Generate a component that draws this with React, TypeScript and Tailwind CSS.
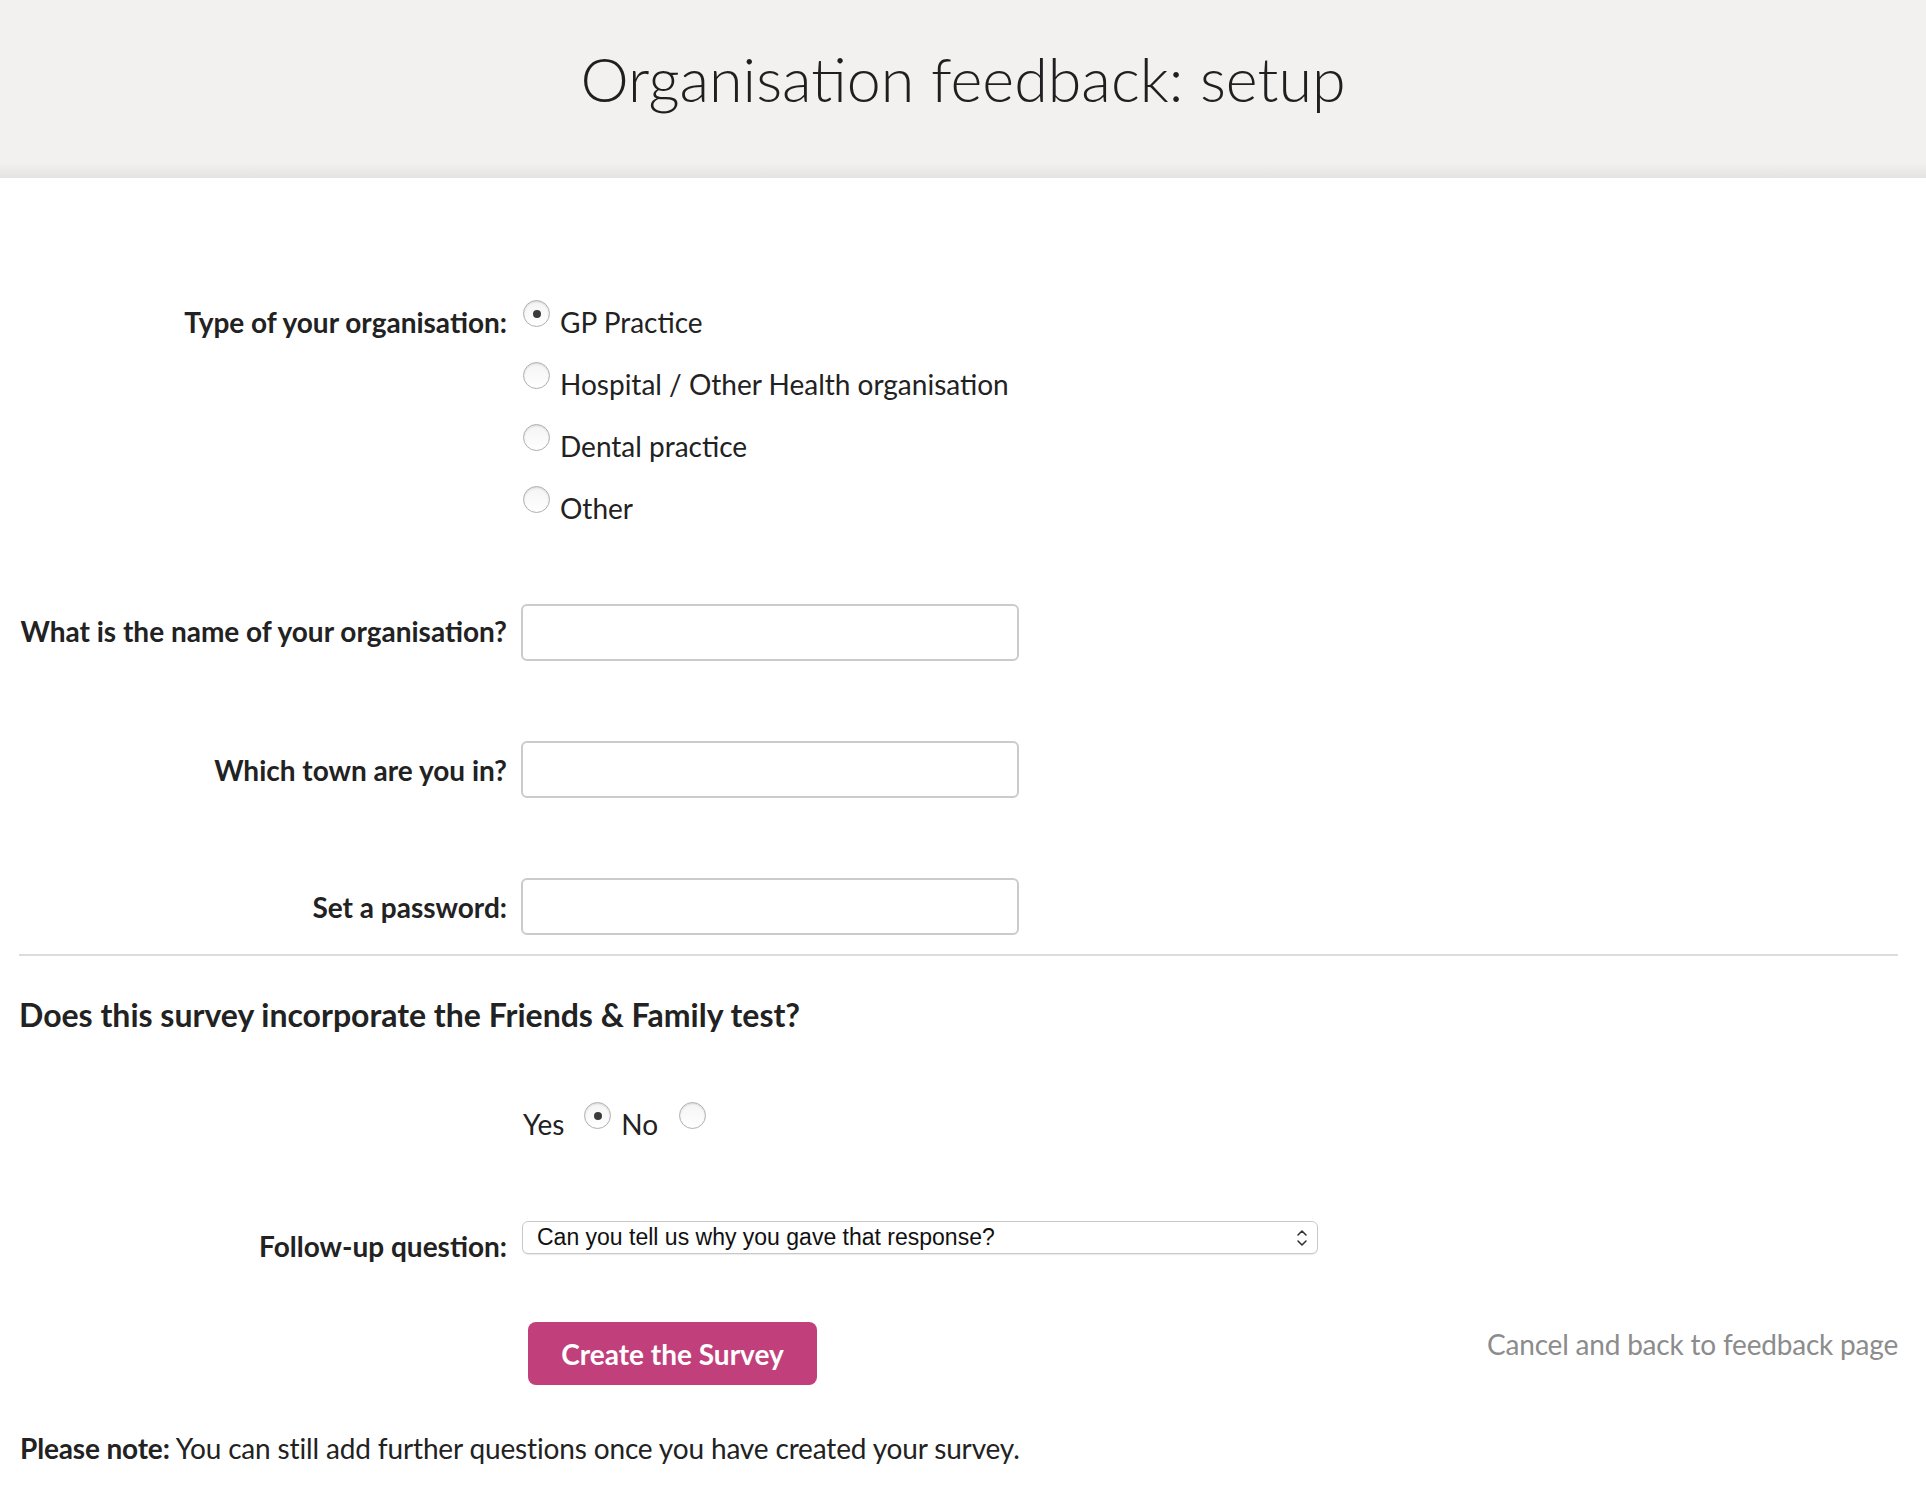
import React from 'react';

const Radio: React.FC<{ checked?: boolean }> = ({ checked }) => (
  <span className="flex h-[27px] w-[27px] shrink-0 items-center justify-center rounded-full border border-[#b0b0b0] bg-gradient-to-b from-[#f4f4f4] to-white shadow-[inset_0_1px_2px_rgba(0,0,0,0.12)]">
    {checked && <span className="h-[8px] w-[8px] rounded-full bg-[#3a3a3a]" />}
  </span>
);

const orgTypes = ['GP Practice', 'Hospital / Other Health organisation', 'Dental practice', 'Other'];
const textFields = ['What is the name of your organisation?', 'Which town are you in?', 'Set a password:'];

const App: React.FC = () => {
  return (
    <div className="min-h-screen bg-white font-['Lato','Noto_Sans',sans-serif] text-[28px] text-[#222]">
      <header className="flex h-[178px] flex-col bg-[#f2f1f0]">
        <h1 className="pt-[48px] text-center text-[61px] font-light leading-[61px] text-[#1f1f1f]">
          Organisation feedback: setup
        </h1>
        <div className="mt-auto h-[15px] bg-gradient-to-b from-[#f2f1f0] to-[#e4e3e2]" />
      </header>

      <main className="pl-[19px] pr-[28px] pt-[123px]">
        <div className="flex items-start">
          <label className="w-[488px] text-right font-bold leading-[42px]">Type of your organisation:</label>
          <div className="ml-[16px] flex flex-col gap-[20px]">
            {orgTypes.map((t, i) => (
              <div key={t} className="flex items-start">
                <span className="mt-[-1px]">
                  <Radio checked={i === 0} />
                </span>
                <span className="ml-[10px] leading-[42px]">{t}</span>
              </div>
            ))}
          </div>
        </div>

        <div className="mt-[75px] flex flex-col gap-[80px]">
          {textFields.map((f, i) => (
            <div key={f} className="flex items-center">
              <label className={`w-[488px] text-right font-bold leading-[42px] ${i === 0 ? 'mt-[-3px]' : ''}`}>{f}</label>
              <input
                type={f.startsWith('Set') ? 'password' : 'text'}
                className="ml-[14px] h-[57px] w-[498px] rounded-[6px] border-2 border-[#cbcbcb] bg-white px-3 outline-none"
              />
            </div>
          ))}
        </div>

        <div className="mt-[19px] h-[2px] bg-[#dedbd8]" />

        <h2 className="mt-[40px] text-[32px] font-bold leading-[38px]">
          Does this survey incorporate the Friends &amp; Family test?
        </h2>

        <div className="mt-[69px] flex items-start pl-[504px]">
          <span className="leading-[42px]">Yes</span>
          <span className="ml-[20px] mt-[-1px]">
            <Radio checked />
          </span>
          <span className="ml-[10px] leading-[42px]">No</span>
          <span className="ml-[21px] mt-[-1px]">
            <Radio />
          </span>
        </div>

        <div className="mt-[76px] flex items-start">
          <label className="mt-[4px] w-[488px] text-right font-bold leading-[42px]">Follow-up question:</label>
          <div className="ml-[15px] flex h-[33px] w-[796px] items-center justify-between rounded-[6px] border border-[#c9c9c9] bg-white pl-[14px] pr-[9px] font-['Liberation_Sans',Arial,sans-serif] text-[23px] text-[#111] shadow-[0_1px_1px_rgba(0,0,0,0.08)]">
            <span>Can you tell us why you gave that response?</span>
            <svg width="12" height="20" viewBox="0 0 12 20" fill="none" stroke="#333" strokeWidth="1.6" strokeLinecap="round" strokeLinejoin="round">
              <path d="M2 7 L6 3 L10 7" />
              <path d="M2 13 L6 17 L10 13" />
            </svg>
          </div>
        </div>

        <div className="mt-[55px] flex items-start justify-between">
          <button className="ml-[509px] h-[63px] w-[289px] rounded-[8px] bg-[#c1407c] font-bold text-white">
            Create the Survey
          </button>
          <a href="#" className="mt-[1px] leading-[42px] tracking-[-0.2px] text-[#8c8c8c]">
            Cancel and back to feedback page
          </a>
        </div>

        <p className="mt-[42px] pl-[1px] leading-[42px] tracking-[-0.15px]">
          <span className="font-bold">Please note:</span> You can still add further questions once you have created your survey.
        </p>
      </main>
    </div>
  );
};

export default App;
